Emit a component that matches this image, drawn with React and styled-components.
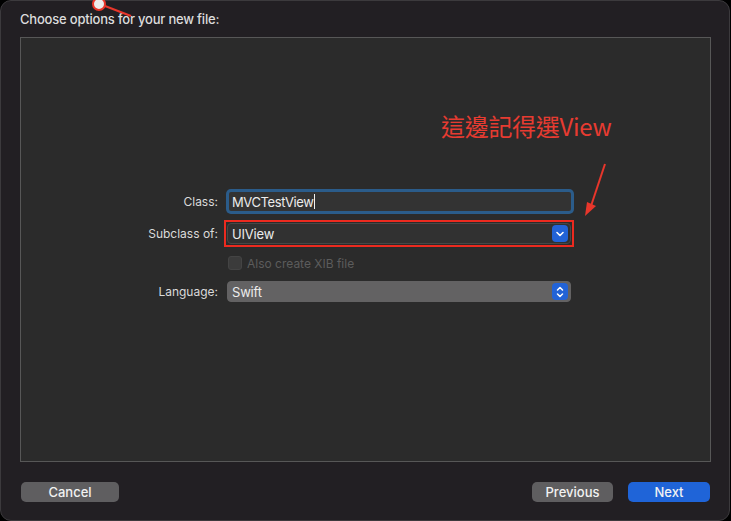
import React from "react";
import styled, { createGlobalStyle } from "styled-components";

const GlobalStyle = createGlobalStyle`
  html, body {
    margin: 0;
    padding: 0;
    background: #000;
  }
  body {
    font-family: Inter, "Noto Sans", sans-serif;
    -webkit-font-smoothing: antialiased;
  }
`;

const Window = styled.div`
  position: relative;
  box-sizing: border-box;
  width: 730px;
  height: 521px;
  border: 1px solid #3c3a3d;
  border-radius: 11px;
  background: #221f23;
  display: flex;
  flex-direction: column;
  padding: 10px 19px 0;
`;

const Title = styled.div`
  font-size: 13px;
  line-height: 16px;
  font-weight: 500;
  letter-spacing: -0.2px;
  color: #dcdcdc;
  margin-bottom: 10px;
`;

const Panel = styled.div`
  position: relative;
  box-sizing: border-box;
  width: 691px;
  height: 425px;
  background: #2b2b2b;
  border: 1px solid #575757;
  padding-top: 152px;
`;

const Form = styled.div`
  display: flex;
  flex-direction: column;
`;

const Row = styled.div`
  display: flex;
  align-items: center;
  height: ${(p) => p.$h}px;
  margin-top: ${(p) => p.$top || 0}px;
`;

const Label = styled.div`
  width: 197px;
  margin-right: 9px;
  text-align: right;
  font-size: 12px;
  color: #dadada;
`;

const TextField = styled.div`
  box-sizing: border-box;
  width: 342px;
  height: 19px;
  margin-left: 2px;
  background: #333;
  border-radius: 2px;
  box-shadow: 0 0 0 3px #2b5c8a, 0 0 0 1px #3e7cb8;
  display: flex;
  align-items: center;
  padding-left: 3px;
  font-size: 13px;
  letter-spacing: -0.4px;
  color: #ececec;
`;

const Caret = styled.span`
  display: inline-block;
  width: 1px;
  height: 15px;
  background: #f0f0f0;
  margin-left: 1px;
`;

const Marked = styled.div`
  outline: 2px solid #ec2a1f;
  outline-offset: 1px;
  display: flex;
`;

const Popup = styled.div`
  box-sizing: border-box;
  width: 344px;
  height: 21px;
  border-radius: 4px;
  background: ${(p) => (p.$light ? "#636263" : "#313131")};
  border: 1px solid ${(p) => (p.$light ? "#636263" : "#474747")};
  display: flex;
  align-items: center;
  justify-content: space-between;
  padding: 0 2px 0 4px;
  font-size: 13px;
  letter-spacing: -0.2px;
  color: #ececec;
`;

const Stepper = styled.div`
  width: 16px;
  height: 17px;
  border-radius: 4px;
  background: #2263d7;
  display: flex;
  align-items: center;
  justify-content: center;
`;

const Check = styled.div`
  box-sizing: border-box;
  width: 14px;
  height: 14px;
  margin-left: 1px;
  border-radius: 3px;
  background: #3b3b3b;
  border: 1px solid #444;
`;

const CheckText = styled.span`
  margin-left: 5px;
  font-size: 12px;
  color: #5c5c5c;
`;

const Note = styled.div`
  position: absolute;
  left: 420px;
  top: 70px;
  font-family: "Noto Sans CJK TC", "Noto Sans", sans-serif;
  font-size: 24px;
  font-weight: 400;
  letter-spacing: -0.3px;
  color: #e73b31;
  white-space: nowrap;
`;

const Overlay = styled.svg`
  position: absolute;
  left: 0;
  top: 0;
  pointer-events: none;
  overflow: visible;
`;

const Footer = styled.div`
  display: flex;
  align-items: center;
  margin-top: 20px;
  padding-left: 1px;
  gap: 15px;
`;

const Button = styled.div`
  box-sizing: border-box;
  width: ${(p) => p.$w}px;
  height: 20px;
  border-radius: 5px;
  background: ${(p) => (p.$primary ? "#1f64d8" : "#5f5e60")};
  color: #f2f2f2;
  font-size: 13px;
  font-weight: 500;
  display: flex;
  align-items: center;
  justify-content: center;
`;

const Spacer = styled.div`
  flex: 1;
`;

const ChevronDown = () => (
  <svg width="10" height="8" viewBox="0 0 10 8">
    <path d="M2 2.5 L5 5.5 L8 2.5" fill="none" stroke="#fff" strokeWidth="1.6" strokeLinecap="round" strokeLinejoin="round" />
  </svg>
);

const ChevronUpDown = () => (
  <svg width="10" height="14" viewBox="0 0 10 14">
    <path d="M2.5 5 L5 2.5 L7.5 5 M2.5 9 L5 11.5 L7.5 9" fill="none" stroke="#fff" strokeWidth="1.5" strokeLinecap="round" strokeLinejoin="round" />
  </svg>
);

export default function App() {
  return (
    <>
      <GlobalStyle />
      <Window>
        <Title>Choose options for your new file:</Title>
        <Panel>
          <Note>這邊記得選View</Note>
          <Overlay width="691" height="425">
            <line x1="584" y1="126" x2="570" y2="168" stroke="#e8362b" strokeWidth="2" />
            <path d="M564 178 L566 164 L575 168 Z" fill="#e8362b" />
          </Overlay>
          <Form>
            <Row $h={23}>
              <Label>Class:</Label>
              <TextField>
                MVCTestView<Caret />
              </TextField>
            </Row>
            <Row $h={21} $top={10}>
              <Label>Subclass of:</Label>
              <Marked>
                <Popup>
                  UIView
                  <Stepper>
                    <ChevronDown />
                  </Stepper>
                </Popup>
              </Marked>
            </Row>
            <Row $h={14} $top={12}>
              <Label />
              <Check />
              <CheckText>Also create XIB file</CheckText>
            </Row>
            <Row $h={21} $top={11}>
              <Label>Language:</Label>
              <Popup $light>
                Swift
                <Stepper>
                  <ChevronUpDown />
                </Stepper>
              </Popup>
            </Row>
          </Form>
        </Panel>
        <Footer>
          <Button $w={98}>Cancel</Button>
          <Spacer />
          <Button $w={81}>Previous</Button>
          <Button $w={82} $primary>
            Next
          </Button>
        </Footer>
        <Overlay width="200" height="30" style={{ left: 0, top: 0 }}>
          <line x1="104" y1="5" x2="130" y2="15" stroke="#e8362b" strokeWidth="2" />
          <circle cx="98" cy="3" r="6" fill="#ececec" stroke="#e8362b" strokeWidth="2" />
        </Overlay>
      </Window>
    </>
  );
}
